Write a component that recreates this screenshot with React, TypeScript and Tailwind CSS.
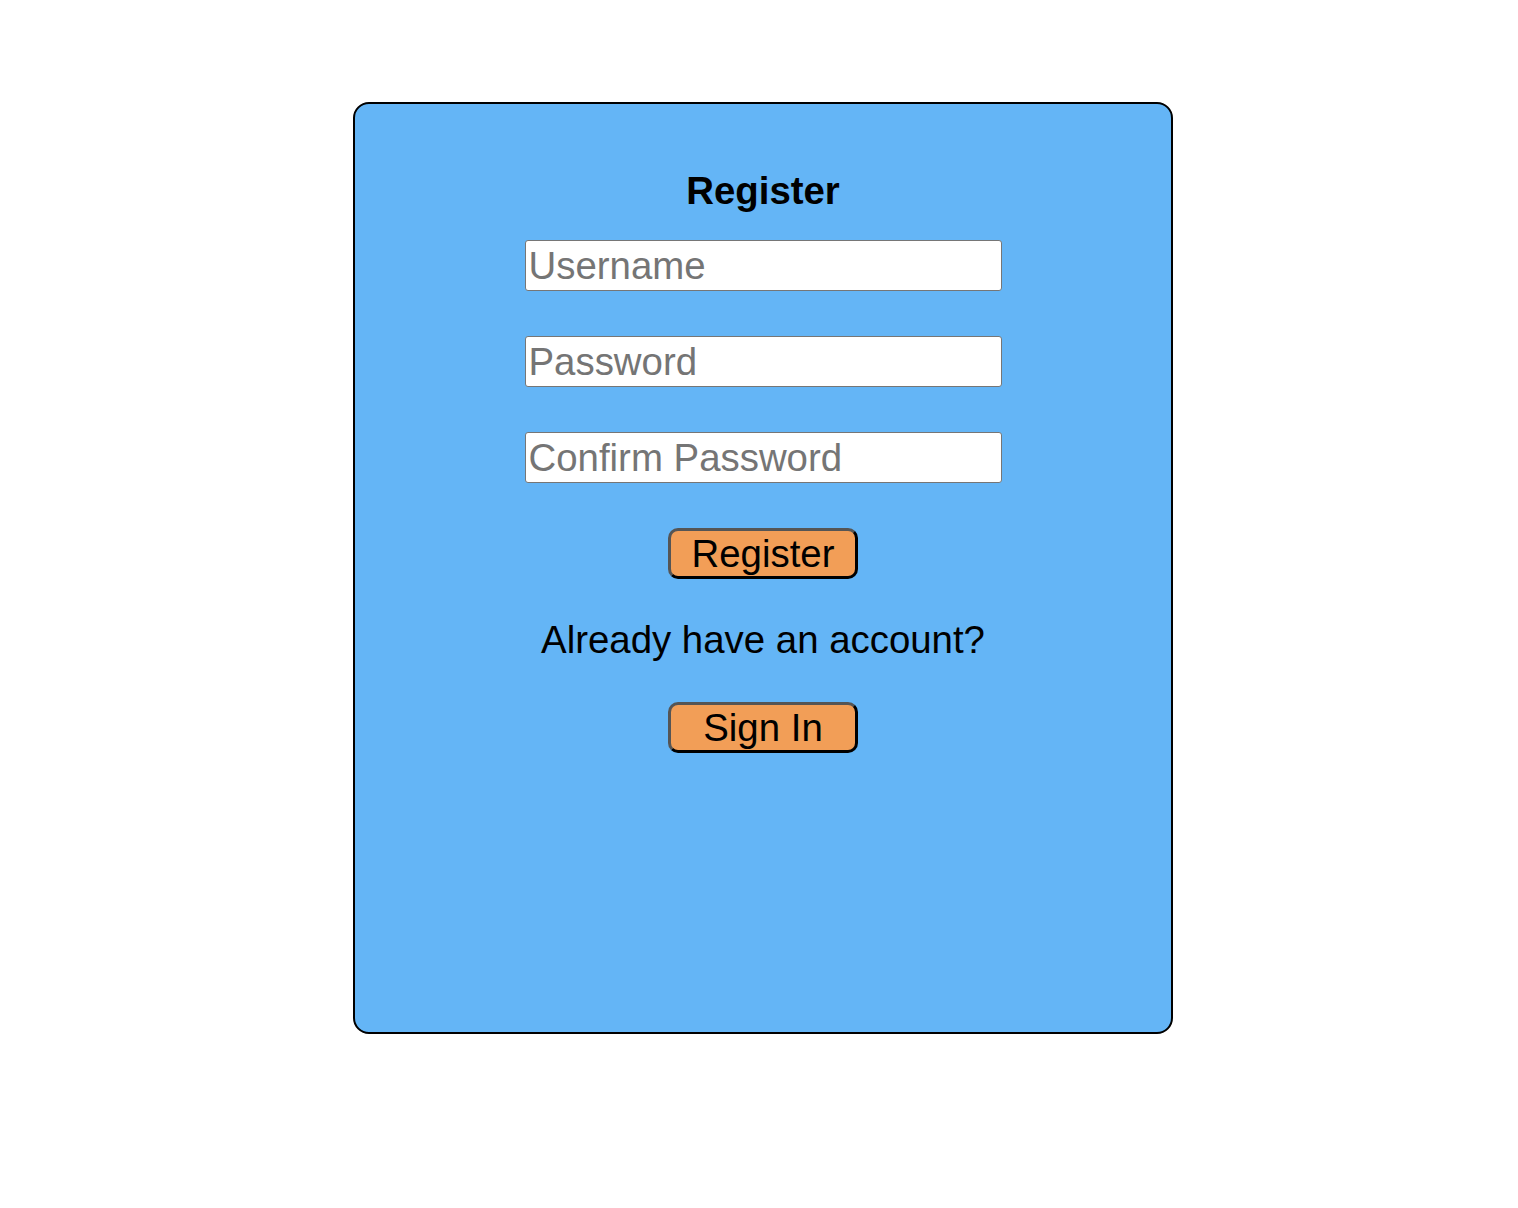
export default function App() {
  const font = { fontFamily: '"Liberation Sans", Arial, sans-serif' };
  const inputCls =
    "block w-[477px] h-[51px] bg-white border border-[#767676] rounded-[3px] px-[3px] text-[38.4px] leading-[44px] text-black placeholder:text-[#757575] outline-none";
  const btnCls =
    "w-[190px] h-[51px] bg-[#f29e57] rounded-[10px] border-[3px] border-t-[#555555] border-l-[#555555] border-b-black border-r-black text-[38.4px] leading-[44px] text-black flex items-center justify-center";
  return (
    <div className="min-h-[1208px] bg-white pt-[102px] pl-[353px]" style={font}>
      <div className="w-[820px] h-[932px] bg-[#64b5f6] border-2 border-black rounded-[16px] flex flex-col items-center pt-[65px]">
        <h1 className="text-[38.4px] leading-[44px] font-bold text-black h-[44px]">Register</h1>
        <input className={inputCls + " mt-[27px]"} placeholder="Username" />
        <input className={inputCls + " mt-[45px]"} placeholder="Password" type="password" />
        <input className={inputCls + " mt-[45px]"} placeholder="Confirm Password" type="password" />
        <button className={btnCls + " mt-[45px]"}>Register</button>
        <p className="mt-[39px] text-[38.4px] leading-[44px] text-black">Already have an account?</p>
        <button className={btnCls + " mt-[40px]"}>Sign In</button>
      </div>
    </div>
  );
}
